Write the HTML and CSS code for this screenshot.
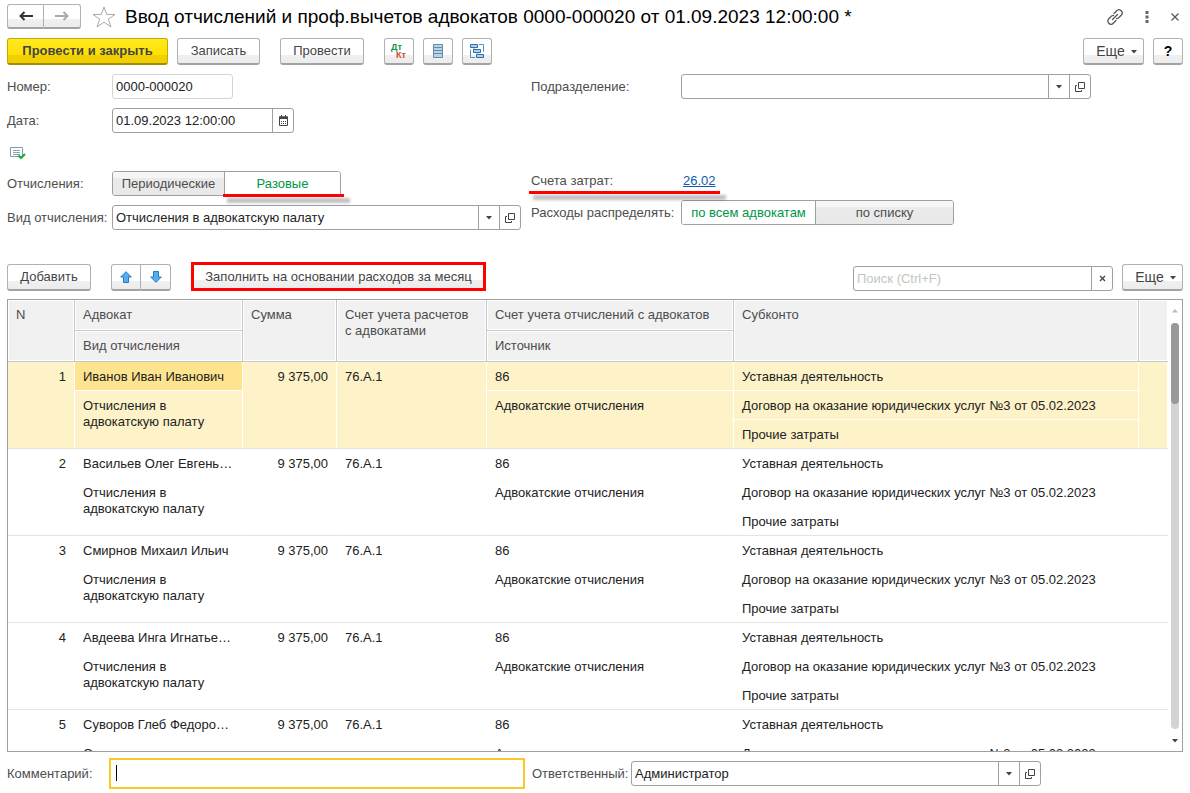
FILE: index.html
```html
<!DOCTYPE html>
<html lang="ru">
<head>
<meta charset="utf-8">
<title>Ввод отчислений и проф.вычетов адвокатов</title>
<link rel="stylesheet" href="styles.css">
</head>
<body>
<svg class="sprite" aria-hidden="true">
  <symbol id="i-open" viewBox="0 0 10 10"><path d="M3.500.5h6v6h-6zM2 3.500H.5v6h6V8" fill="none" stroke="#444"/></symbol>
  <symbol id="i-down" viewBox="0 0 6 4"><path d="M0 0h6L3 3.500z" fill="#444"/></symbol>
  <symbol id="i-up" viewBox="0 0 6 4"><path d="M3 0l3 3.500H0z" fill="#bbb"/></symbol>
</svg>
<div class="page">
  <header class="titlebar">
    <div class="btn-group nav">
      <button class="btn" aria-label="Назад"><svg width="14" height="10" viewBox="0 0 14 10"><path d="M1.500 5H14M5.500 1L1.500 5l4 4" fill="none" stroke="#333" stroke-width="2"/></svg></button>
      <button class="btn" aria-label="Вперед"><svg width="14" height="10" viewBox="0 0 14 10"><path d="M0 5h12.500M8.500 1l4 4-4 4" fill="none" stroke="#aaa" stroke-width="2"/></svg></button>
    </div>
    <button class="plain star" aria-label="В избранное"><svg width="24" height="22" viewBox="0 0 24 22"><path d="M12 1l2.700 7.400h8.300l-6.700 4.900 2.700 7.700-7-4.900L5 21l2.700-7.700L1 8.400h8.300z" fill="none" stroke="#a8a8a8"/></svg></button>
    <h1>Ввод отчислений и проф.вычетов адвокатов 0000-000020 от 01.09.2023 12:00:00 *</h1>
    <div class="window-actions">
      <button class="plain" aria-label="Ссылка"><svg width="16" height="16" viewBox="0 0 16 16"><g fill="none" stroke="#555" stroke-width="1.300" stroke-linecap="round"><path d="M7 4.500l2.700-2.700a3 3 0 0 1 4.500 4.500L11.500 9l-2 .6M9 11.500l-2.700 2.700a3 3 0 0 1-4.500-4.500L4.500 7l2-.6M5.500 10.500l5-5"/></g></svg></button>
      <button class="plain" aria-label="Меню"><svg width="4" height="12" viewBox="0 0 4 12"><path d="M.5 0h3v3h-3zM.5 4.500h3v3h-3zM.5 9h3v3h-3z" fill="#666"/></svg></button>
      <button class="plain" aria-label="Закрыть"><svg width="8" height="8" viewBox="0 0 8 8"><path d="M.5.5l7 7M7.500.5l-7 7" stroke="#555" stroke-width="1.200"/></svg></button>
    </div>
  </header>

  <div class="toolbar commands">
    <button class="btn primary">Провести и закрыть</button>
    <button class="btn save">Записать</button>
    <button class="btn post">Провести</button>
    <button class="btn icon" aria-label="Дт Кт"><svg width="18" height="18" viewBox="0 0 18 18"><text x="1" y="8" class="dt">Дт</text><text x="6" y="16" class="kt">Кт</text></svg></button>
    <button class="btn icon" aria-label="Реестр"><svg width="10" height="14" viewBox="0 0 10 14"><path d="M.5.5h9v3h-9zM.5 3.500h9v3h-9zM.5 6.500h9v3h-9zM.5 9.500h9v4h-9z" fill="#b5d5e8" stroke="#668ba2"/></svg></button>
    <button class="btn icon" aria-label="Структура"><svg width="14" height="14" viewBox="0 0 14 14"><g fill="#a9d4ef" stroke="#2d6ca8"><path d="M.5.5h7v3h-7zM3.500 5.500h7v3h-7zM6.500 10.500h7v3h-7z"/><path d="M9 .5h4.500V8M.5 5.500v8H5M4 3.500v2M7 8.500v2" fill="none" stroke="#5a8fbd"/></g></svg></button>
    <span class="spring"></span>
    <button class="btn more">Еще <svg width="6" height="4"><use href="#i-down"/></svg></button>
    <button class="btn icon help">?</button>
  </div>

  <main class="form">
    <div class="col">
      <div class="row"><label for="num">Номер:</label><span class="field short readonly"><input id="num" value="0000-000020" readonly></span></div>
      <div class="row"><label for="date">Дата:</label><span class="field date"><input id="date" value="01.09.2023 12:00:00"><button aria-label="Календарь"><svg width="9" height="11" viewBox="0 0 9 11"><path d="M.5 2h8v8.500h-8z" fill="none" stroke="#444"/><path d="M0 1.500h9v2.500H0zM2 0h1v2H2zM6 0h1v2H6z" fill="#444"/><path d="M2 6.500h5M2 8.500h5" stroke="#444" stroke-dasharray="1 1"/></svg></button></span></div>
      <div class="status"><svg width="16" height="14" viewBox="0 0 16 14"><path d="M.5.500h12v9H.5z" fill="#fff" stroke="#7d9db0"/><path d="M3 3.500h7M3 5.500h7M3 7.500h7" stroke="#8fa3b0"/><path d="M8.500 8.500l2.500 2.500 4-4" fill="none" stroke="#22a844" stroke-width="2.200"/></svg></div>
      <div class="row" role="radiogroup" aria-label="Отчисления"><span class="label">Отчисления:</span>
        <span class="segmented kind">
          <label><input type="radio" name="kind"><span>Периодические</span></label>
          <label class="marked"><input type="radio" name="kind" checked><span>Разовые</span></label>
        </span>
      </div>
      <div class="row"><label for="type">Вид отчисления:</label><span class="field grow"><input id="type" value="Отчисления в адвокатскую палату"><button aria-label="Выбрать"><svg width="6" height="4"><use href="#i-down"/></svg></button><button aria-label="Открыть"><svg width="10" height="10"><use href="#i-open"/></svg></button></span></div>
    </div>
    <div class="col right">
      <div class="row"><label for="dep">Подразделение:</label><span class="field grow"><input id="dep"><button aria-label="Выбрать"><svg width="6" height="4"><use href="#i-down"/></svg></button><button aria-label="Открыть"><svg width="10" height="10"><use href="#i-open"/></svg></button></span></div>
      <div class="row account"><span class="marked accounts"><span class="label">Счета затрат:</span><a href="#">26.02</a></span></div>
      <div class="row" role="radiogroup" aria-label="Расходы распределять"><span class="label">Расходы распределять:</span>
        <span class="segmented spread">
          <label><input type="radio" name="spread" checked><span>по всем адвокатам</span></label>
          <label><input type="radio" name="spread"><span>по списку</span></label>
        </span>
      </div>
    </div>
  </main>

  <div class="toolbar table-tools">
    <button class="btn add">Добавить</button>
    <div class="btn-group move">
      <button class="btn" aria-label="Вверх"><svg width="12" height="12" viewBox="0 0 12 12"><path d="M6 .7L11.300 6H8.500v5.500h-5V6H.7z" fill="#4fb0f5" stroke="#2c75b5"/></svg></button>
      <button class="btn" aria-label="Вниз"><svg width="12" height="12" viewBox="0 0 12 12"><path d="M6 11.300L11.300 6H8.500V.5h-5V6H.7z" fill="#4fb0f5" stroke="#2c75b5"/></svg></button>
    </div>
    <button class="btn fill">Заполнить на основании расходов за месяц</button>
    <span class="spring"></span>
    <span class="field search"><input type="text" aria-label="Поиск" placeholder="Поиск (Ctrl+F)"><button aria-label="Очистить"><svg width="7" height="7" viewBox="0 0 7 7"><path d="M1 1l5 5M6 1L1 6" stroke="#444" stroke-width="1.300"/></svg></button></span>
    <button class="btn more">Еще <svg width="6" height="4"><use href="#i-down"/></svg></button>
  </div>

  <section class="grid">
    <div class="grid-view">
      <table>
        <colgroup><col class="c-n"><col class="c-name"><col class="c-sum"><col class="c-acc"><col class="c-acc2"><col><col class="c-end"></colgroup>
        <thead>
          <tr><th rowspan="2">N</th><th>Адвокат</th><th rowspan="2">Сумма</th><th rowspan="2">Счет учета расчетов<br>с адвокатами</th><th>Счет учета отчислений с адвокатов</th><th rowspan="2">Субконто</th><th rowspan="2"></th></tr>
          <tr><th>Вид отчисления</th><th class="inner">Источник</th></tr>
        </thead>
        <tbody class="selected">
          <tr><td rowspan="3" class="num">1</td><td class="current">Иванов Иван Иванович</td><td rowspan="3" class="num">9 375,00</td><td rowspan="3">76.А.1</td><td>86</td><td>Уставная деятельность</td><td rowspan="3"></td></tr>
          <tr><td rowspan="2" class="wrap">Отчисления в адвокатскую палату</td><td rowspan="2">Адвокатские отчисления</td><td>Договор на оказание юридических услуг №3 от 05.02.2023</td></tr>
          <tr><td>Прочие затраты</td></tr>
        </tbody>
        <tbody>
          <tr><td rowspan="3" class="num">2</td><td>Васильев Олег Евгеньевич</td><td rowspan="3" class="num">9 375,00</td><td rowspan="3">76.А.1</td><td>86</td><td>Уставная деятельность</td><td rowspan="3"></td></tr>
          <tr><td rowspan="2" class="wrap">Отчисления в адвокатскую палату</td><td rowspan="2">Адвокатские отчисления</td><td>Договор на оказание юридических услуг №3 от 05.02.2023</td></tr>
          <tr><td>Прочие затраты</td></tr>
        </tbody>
        <tbody>
          <tr><td rowspan="3" class="num">3</td><td>Смирнов Михаил Ильич</td><td rowspan="3" class="num">9 375,00</td><td rowspan="3">76.А.1</td><td>86</td><td>Уставная деятельность</td><td rowspan="3"></td></tr>
          <tr><td rowspan="2" class="wrap">Отчисления в адвокатскую палату</td><td rowspan="2">Адвокатские отчисления</td><td>Договор на оказание юридических услуг №3 от 05.02.2023</td></tr>
          <tr><td>Прочие затраты</td></tr>
        </tbody>
        <tbody>
          <tr><td rowspan="3" class="num">4</td><td>Авдеева Инга Игнатьевна</td><td rowspan="3" class="num">9 375,00</td><td rowspan="3">76.А.1</td><td>86</td><td>Уставная деятельность</td><td rowspan="3"></td></tr>
          <tr><td rowspan="2" class="wrap">Отчисления в адвокатскую палату</td><td rowspan="2">Адвокатские отчисления</td><td>Договор на оказание юридических услуг №3 от 05.02.2023</td></tr>
          <tr><td>Прочие затраты</td></tr>
        </tbody>
        <tbody>
          <tr><td rowspan="3" class="num">5</td><td>Суворов Глеб Федорович</td><td rowspan="3" class="num">9 375,00</td><td rowspan="3">76.А.1</td><td>86</td><td>Уставная деятельность</td><td rowspan="3"></td></tr>
          <tr><td rowspan="2" class="wrap">Отчисления в адвокатскую палату</td><td rowspan="2">Адвокатские отчисления</td><td>Договор на оказание юридических услуг №3 от 05.02.2023</td></tr>
          <tr><td>Прочие затраты</td></tr>
        </tbody>
      </table>
    </div>
    <div class="scroll" aria-hidden="true">
      <svg width="6" height="4"><use href="#i-up"/></svg>
      <div class="track"><div class="thumb"></div></div>
      <svg width="6" height="4"><use href="#i-down"/></svg>
    </div>
  </section>

  <footer class="footer">
    <div class="row"><label for="comment">Комментарий:</label><span class="field focus"><input id="comment"></span></div>
    <div class="row"><label for="resp">Ответственный:</label><span class="field grow"><input id="resp" value="Администратор"><button aria-label="Выбрать"><svg width="6" height="4"><use href="#i-down"/></svg></button><button aria-label="Открыть"><svg width="10" height="10"><use href="#i-open"/></svg></button></span></div>
  </footer>
</div>
</body>
</html>
```

FILE: styles.css
```css
* { box-sizing: border-box; }

body {
  margin: 0;
  background: #fff;
  color: #333;
  font: 13px/16px "Liberation Sans", Arial, sans-serif;
}

button, input { font: inherit; color: inherit; margin: 0; }
svg { display: block; flex: none; }
.sprite { position: absolute; width: 0; height: 0; }

.page {
  display: flex;
  flex-direction: column;
  height: 100vh;
  padding: 4px 7px;
}

/* Title bar */
.titlebar { display: flex; align-items: center; height: 25px; }
h1 { flex: 1; min-width: 0; margin: 0 0 0 9px; font-size: 19px; line-height: 24px; font-weight: 400; color: #000; white-space: nowrap; }
.plain { display: flex; padding: 0; border: 0; background: none; }
.star { margin-left: 11px; }
.window-actions { display: flex; align-items: center; gap: 22px; padding-right: 4px; }

/* Buttons */
.btn {
  display: flex;
  align-items: center;
  justify-content: center;
  height: 27px;
  padding: 0;
  border: 1px solid #b1b1b1;
  border-bottom: 2px solid #a3a3a3;
  border-radius: 3px;
  background: linear-gradient(#fff 65%, #f0f0f0 65%, #ececec);
  color: #444;
  white-space: nowrap;
}
.btn-group { display: flex; }
.btn-group .btn:first-child { border-radius: 3px 0 0 3px; }
.btn-group .btn + .btn { border-left: 0; border-radius: 0 3px 3px 0; }
.nav .btn { width: 37px; height: 25px; }
.move .btn { width: 30px; }

.toolbar { display: flex; align-items: center; }
.spring { flex: 1; }
.commands { margin-top: 9px; gap: 9px; }
.primary {
  width: 161px;
  border-color: #c5a900 #c5a900 #a38c00;
  background: linear-gradient(#ffe924, #ffe000 65%, #f0d000 65%, #f0d000);
  font-weight: 700;
}
.save { width: 83px; }
.post { width: 84px; margin: 0 11px; }
.icon { width: 30px; }
.more { width: 61px; gap: 6px; padding-left: 6px; font-size: 14px; }
.more svg { margin-top: 2px; }
.help { font-size: 14px; font-weight: 700; color: #000; }
.dt, .kt { font: 700 9px "Liberation Sans", Arial, sans-serif; }
.dt { fill: #159250; }
.kt { fill: #cc4b35; }

/* Form */
.form {
  display: grid;
  grid-template-columns: 514fr 560fr;
  gap: 10px;
  margin-top: 9px;
  padding-right: 92px;
  color: #4d4d4d;
}
.col { display: flex; flex-direction: column; gap: 9px; }
.row { display: flex; align-items: center; white-space: nowrap; }
.row > label, .label { flex: none; width: 105px; }
.right .row > label, .right .label { width: 150px; }
.status { height: 20px; padding: 5px 3px; }

.field {
  display: flex;
  height: 25px;
  border: 1px solid #a0a0a0;
  border-radius: 3px;
  background: #fff;
  color: #222;
}
.field input { flex: 1; min-width: 0; padding: 0 3px; border: 0; outline: 0; background: none; }
.field button {
  display: flex;
  align-items: center;
  justify-content: center;
  width: 21px;
  padding: 0;
  border: 0;
  border-left: 1px solid #a0a0a0;
  background: none;
}
.grow { flex: 1; min-width: 0; }
.short { width: 121px; }
.readonly { border-color: #d5d5d5; }
.date { width: 182px; }

.segmented { display: flex; height: 25px; border: 1px solid #a0a0a0; border-radius: 3px; }
.segmented label { position: relative; display: flex; }
.segmented label + label { border-left: 1px solid #a0a0a0; }
.segmented input { position: absolute; opacity: 0; }
.segmented span {
  flex: 1;
  display: flex;
  align-items: center;
  justify-content: center;
  border-radius: 2px;
  background: linear-gradient(#f6f6f6 25%, #ebebeb 25%, #e8e8e8);
}
.segmented input:checked + span { background: #fff; color: #009646; }
.kind { width: 229px; }
.kind label { width: 111px; }
.kind label + label { flex: 1; }
.spread { width: 273px; }
.spread label { width: 133px; }
.spread label + label { flex: 1; }

.account { margin-top: 62px; height: 22px; }
.right .account + .row { margin-top: -1px; }
.accounts { position: relative; display: flex; }
.account a { padding-left: 2px; color: #0b5cad; }

/* Red underline with an offset soft shadow */
.marked::after {
  content: "";
  position: absolute;
  height: 3px;
  left: -2px;
  right: -4px;
  bottom: -2px;
  background: #f00;
  box-shadow: 5px 5px 3px 1px rgba(0, 0, 0, .25);
  z-index: 1;
}
.accounts::after { bottom: -5px; }

/* Table commands */
.table-tools { margin-top: 32px; align-items: flex-end; }
.add { width: 84px; }
.move { margin: 0 20px; }
.fill { width: 295px; height: 29px; border: 3px solid #f00; border-radius: 0; }
.search { width: 260px; margin-right: 9px; }
.search input::placeholder { color: #c0c8c0; opacity: 1; }

/* Data grid */
.grid {
  flex: 1;
  min-height: 0;
  display: flex;
  margin-top: 8px;
  border: 1px solid #a0a0a0;
}
.grid-view { flex: 1; min-width: 0; overflow: hidden; }
table { width: 100%; table-layout: fixed; border-collapse: separate; border-spacing: 0; }
.c-n { width: 67px; }
.c-name { width: 168px; }
.c-sum { width: 94px; }
.c-acc { width: 150px; }
.c-acc2 { width: 247px; }
.c-end { width: 29px; }

th, td {
  padding: 7px 8px 0;
  vertical-align: top;
  text-align: left;
  font-weight: 400;
  white-space: nowrap;
  overflow: hidden;
  text-overflow: ellipsis;
}
th {
  height: 31px;
  border-right: 1px solid #c8c8c8;
  border-bottom: 1px solid #c8c8c8;
  background: #f1f1f1;
  box-shadow: inset 0 0 0 1px #fff;
  color: #4d4d4d;
}
th:last-child:not(.inner) { border-right: 0; }
td { height: 29px; border-right: 1px solid #fff; border-bottom: 1px solid #fff; color: #222; }
td.num { text-align: right; }
td.wrap { white-space: normal; }
td[rowspan="3"], td[rowspan="2"], tr:last-child td { border-bottom-color: #e3e3e3; }
.selected td { background: #fdf2c8; }
.selected .current { background: #ffe48f; }

.scroll {
  width: 14px;
  display: flex;
  flex-direction: column;
  align-items: center;
  padding: 9px 0 8px;
}
.track { flex: 1; width: 8px; margin: 10px 0; border-radius: 4px; background: #d3d3d3; }
.thumb { height: 20%; border-radius: 4px; background: #999; }

/* Footer */
.footer {
  display: grid;
  grid-template-columns: 518fr 509fr;
  gap: 7px;
  margin-top: 6px;
  padding-right: 142px;
  color: #4d4d4d;
}
.footer .row > label { width: 102px; }
.footer .row + .row > label { width: 99px; }
.focus { position: relative; flex: 1; height: 31px; border: 2px solid #fac923; border-radius: 0; }
.focus::before {
  content: "";
  position: absolute;
  left: 5px;
  top: 5px;
  width: 1px;
  height: 16px;
  background: #000;
}
```
